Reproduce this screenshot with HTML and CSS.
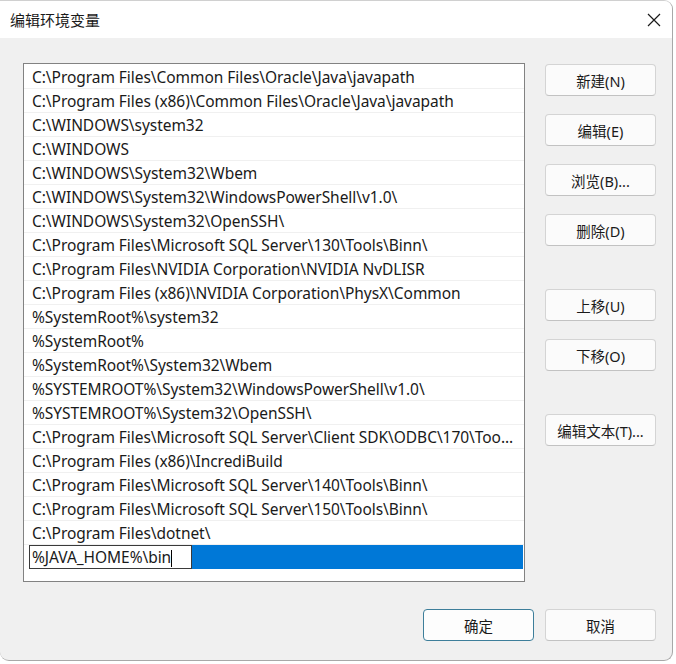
FILE: index.html
```html
<!DOCTYPE html>
<html>
<head>
<meta charset="utf-8">
<link rel="stylesheet" href="styles.css">
</head>
<body>
<div class="window">
  <div class="titlebar">
    <span class="title">编辑环境变量</span>
    <span class="close"><svg width="14" height="14" viewBox="0 0 14 14"><path d="M1 1L13 13M13 1L1 13" stroke="#1a1a1a" stroke-width="1.2" fill="none"/></svg></span>
  </div>
  <div class="body">
    <div class="main">
      <div class="list">
        <div class="row">C:\Program Files\Common Files\Oracle\Java\javapath</div>
        <div class="row">C:\Program Files (x86)\Common Files\Oracle\Java\javapath</div>
        <div class="row">C:\WINDOWS\system32</div>
        <div class="row">C:\WINDOWS</div>
        <div class="row">C:\WINDOWS\System32\Wbem</div>
        <div class="row">C:\WINDOWS\System32\WindowsPowerShell\v1.0\</div>
        <div class="row">C:\WINDOWS\System32\OpenSSH\</div>
        <div class="row">C:\Program Files\Microsoft SQL Server\130\Tools\Binn\</div>
        <div class="row">C:\Program Files\NVIDIA Corporation\NVIDIA NvDLISR</div>
        <div class="row">C:\Program Files (x86)\NVIDIA Corporation\PhysX\Common</div>
        <div class="row">%SystemRoot%\system32</div>
        <div class="row">%SystemRoot%</div>
        <div class="row">%SystemRoot%\System32\Wbem</div>
        <div class="row">%SYSTEMROOT%\System32\WindowsPowerShell\v1.0\</div>
        <div class="row">%SYSTEMROOT%\System32\OpenSSH\</div>
        <div class="row">C:\Program Files\Microsoft SQL Server\Client SDK\ODBC\170\Too...</div>
        <div class="row">C:\Program Files (x86)\IncrediBuild</div>
        <div class="row">C:\Program Files\Microsoft SQL Server\140\Tools\Binn\</div>
        <div class="row">C:\Program Files\Microsoft SQL Server\150\Tools\Binn\</div>
        <div class="row">C:\Program Files\dotnet\</div>
        <div class="row selected"><span class="edit">%JAVA_HOME%\bin<span class="caret"></span></span><span class="highlight"></span></div>
      </div>
      <div class="side">
        <button class="btn">新建(N)</button>
        <button class="btn">编辑(E)</button>
        <button class="btn">浏览(B)...</button>
        <button class="btn">删除(D)</button>
        <button class="btn gap-big">上移(U)</button>
        <button class="btn">下移(O)</button>
        <button class="btn gap-big">编辑文本(T)...</button>
      </div>
    </div>
    <div class="footer">
      <button class="btn primary">确定</button>
      <button class="btn">取消</button>
    </div>
  </div>
</div>
</body>
</html>
```
FILE: styles.css
```css
html, body {
  margin: 0;
  padding: 0;
  background: #ffffff;
}
body {
  font-family: "Noto Sans", "Noto Sans CJK SC", sans-serif;
  font-size: 15.5px;
  color: #1a1a1a;
}
.window {
  width: 673px;
  height: 661px;
  box-sizing: border-box;
  border: 1px solid #a8a8a8;
  border-top-color: #d0d0d0;
  border-left: none;
  border-radius: 0 9px 9px 9px;
  background: #f0f0f0;
  overflow: hidden;
  display: flex;
  flex-direction: column;
}
.titlebar {
  height: 37px;
  background: #ffffff;
  display: flex;
  align-items: center;
  justify-content: space-between;
  padding: 0 11px 0 10px;
  flex-shrink: 0;
}
.title {
  font-family: "Noto Sans CJK SC", sans-serif;
  font-size: 15px;
  color: #1a1a1a;
  margin-top: -1px;
}
.close {
  display: flex;
}
.body {
  flex: 1;
  display: flex;
  flex-direction: column;
  padding: 25px 16px 0 23px;
}
.main {
  display: flex;
  gap: 20px;
}
.list {
  width: 503px;
  height: 519px;
  box-sizing: border-box;
  border: 1px solid #828282;
  background: #ffffff;
  padding-top: 1px;
}
.row {
  height: 24px;
  box-sizing: border-box;
  border-bottom: 1px solid #f0f0f0;
  padding-left: 8px;
  padding-top: 1px;
  line-height: 23px;
  white-space: nowrap;
  overflow: hidden;
  letter-spacing: -0.05px;
}
.row.selected {
  border-bottom: none;
  margin-right: 1px;
  padding-left: 5px;
  padding-top: 0;
  display: flex;
}
.edit {
  display: block;
  flex-shrink: 0;
  box-sizing: border-box;
  width: 163px;
  height: 24px;
  border: 1px solid #3a3a3a;
  background: #ffffff;
  padding-left: 2px;
  line-height: 23px;
}
.highlight {
  flex: 1;
  height: 24px;
  background: #0078d7;
}
.caret {
  display: inline-block;
  width: 1px;
  height: 17px;
  background: #000;
  vertical-align: -4px;
}
.side {
  display: flex;
  flex-direction: column;
  gap: 18px;
  padding-top: 1px;
}
.btn {
  width: 111px;
  height: 32px;
  box-sizing: border-box;
  border: 1px solid #d4d4d4;
  border-bottom-color: #c2c2c2;
  border-radius: 4px;
  background: #fbfbfb;
  font-family: "Noto Sans", "Noto Sans CJK SC", sans-serif;
  font-size: 14.5px;
  color: #1a1a1a;
  padding: 0;
}
.btn.gap-big {
  margin-top: 25px;
}
.footer {
  display: flex;
  justify-content: flex-end;
  gap: 11px;
  margin-top: 27px;
}
.btn.primary {
  border: 1px solid #3d7e9a;
  background: #fdfdfd;
}
```
